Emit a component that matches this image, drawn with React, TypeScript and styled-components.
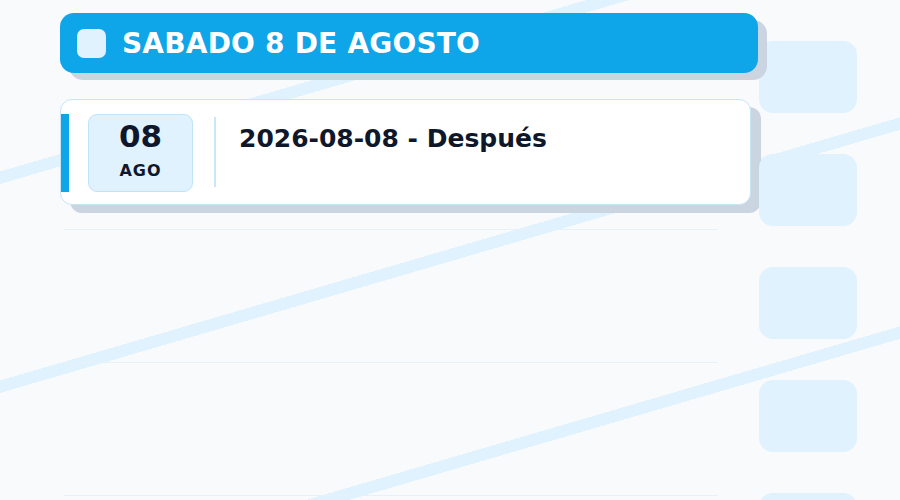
import styled, { createGlobalStyle } from 'styled-components'

const GlobalStyle = createGlobalStyle`
  html, body {
    margin: 0;
    padding: 0;
  }
  body {
    font-family: "DejaVu Sans", "Liberation Sans", sans-serif;
    color: #0f172a;
  }
`

// diagonal ribbons run behind everything on the page
const Page = styled.div`
  width: 100vw;
  height: 100vh;
  overflow: hidden;
  box-sizing: border-box;
  padding-left: 60px;
  display: grid;
  grid-template-columns: 698px 98px;
  align-items: start;
  background-color: #f8fafc;
  background-image: repeating-linear-gradient(
    163.7deg,
    transparent 0 164.6px,
    #e0f2fe 164.6px 176.6px,
    transparent 176.6px 200.6px
  );
`

const Agenda = styled.section`
  display: flex;
  flex-direction: column;
  padding-top: 13px;
`

const DayHeader = styled.header`
  height: 60px;
  display: flex;
  align-items: center;
  gap: 16px;
  padding: 0 17px;
  border-radius: 14px;
  background: #0ea5e9;
  box-shadow: 9px 7px 0 #cbd5e1;
  position: relative;
  z-index: 1;
`

const HeaderCheck = styled.span`
  width: 29px;
  height: 29px;
  border-radius: 7px;
  background: #e0f2fe;
`

const HeaderTitle = styled.h2`
  margin: 0;
  font-size: 28px;
  font-weight: 700;
  color: #ffffff;
  letter-spacing: 0.2px;
`

const Row = styled.div<{ $first?: boolean }>`
  box-sizing: border-box;
  height: ${({ $first }) => ($first ? '157px' : '133px')};
  padding-top: ${({ $first }) => ($first ? '26px' : '0')};
  margin: 0 40px 0 4px;
  border-bottom: 1px solid #e6f1fa;
`

const EventCard = styled.article`
  display: flex;
  align-items: flex-start;
  width: 691px;
  margin-left: -4px;
  box-sizing: border-box;
  height: 106px;
  padding: 14px 24px 12px 0;
  background: #ffffff;
  border: 1px solid #c5e6f7;
  border-radius: 12px;
  box-shadow: 10px 8px 0 #cbd5e1;
`

const Accent = styled.span`
  width: 8px;
  align-self: stretch;
  background: #0ea5e9;
`

const DateBox = styled.div`
  width: 105px;
  height: 78px;
  box-sizing: border-box;
  margin-left: 19px;
  padding-top: 6px;
  display: flex;
  flex-direction: column;
  align-items: center;
  gap: 11px;
  background: #e0f2fe;
  border: 1px solid #bfe3f8;
  border-radius: 9px;
`

const DayNumber = styled.span`
  font-size: 31px;
  line-height: 1;
  font-weight: 700;
`

const MonthLabel = styled.span`
  font-size: 16px;
  line-height: 1;
  font-weight: 700;
  letter-spacing: 1px;
`

const Divider = styled.span`
  width: 2px;
  height: 70px;
  margin: 3px 23px 0 21px;
  background: #c9e7f8;
`

const EventTitle = styled.h3`
  margin: 10px 0 0;
  font-size: 25px;
  line-height: 1.2;
  font-weight: 700;
`

// strip of soft tiles down the right edge
const TileStrip = styled.aside`
  display: flex;
  flex-direction: column;
  gap: 41px;
  margin-top: -72px;
  padding-left: 1px;
`

const Tile = styled.span`
  width: 98px;
  height: 72px;
  border-radius: 14px;
  background: #e0f2fe;
`

export default function App() {
  return (
    <>
      <GlobalStyle />
      <Page>
        <Agenda>
          <DayHeader>
            <HeaderCheck />
            <HeaderTitle>SABADO 8 DE AGOSTO</HeaderTitle>
          </DayHeader>
          <Row $first>
            <EventCard>
              <Accent />
              <DateBox>
                <DayNumber>08</DayNumber>
                <MonthLabel>AGO</MonthLabel>
              </DateBox>
              <Divider />
              <EventTitle>2026-08-08 - Después</EventTitle>
            </EventCard>
          </Row>
          <Row />
          <Row />
        </Agenda>
        <TileStrip>
          {[0, 1, 2, 3, 4, 5].map(i => (
            <Tile key={i} />
          ))}
        </TileStrip>
      </Page>
    </>
  )
}
